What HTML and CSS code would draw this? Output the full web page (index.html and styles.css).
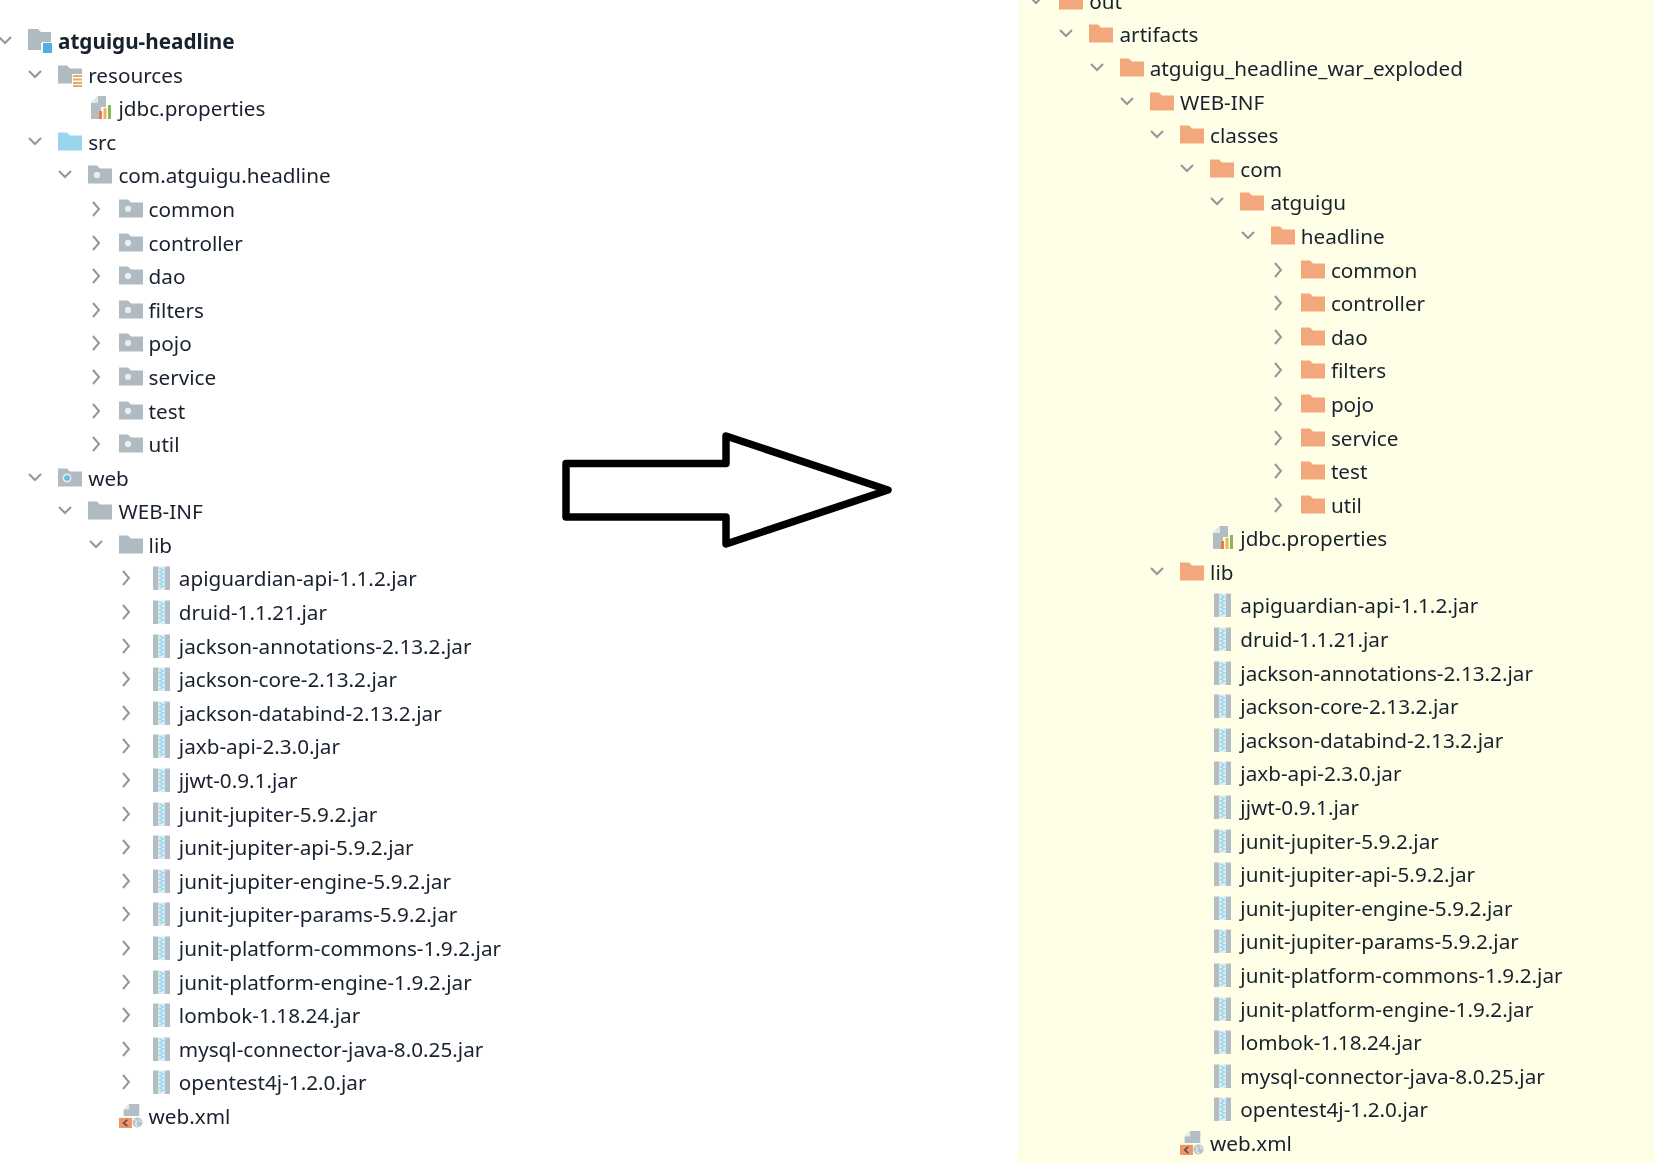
FILE: index.html
```html
<!DOCTYPE html>
<html lang="en">
<head>
<meta charset="utf-8">
<title>Project trees</title>
<link rel="stylesheet" href="styles.css">
</head>
<body>
<svg class="defs" width="0" height="0" aria-hidden="true">
  <defs>
    <symbol id="down" viewBox="0 0 14 24"><path d="M1 8l6 6 6-6" fill="none" stroke="#92979b" stroke-width="2"/></symbol>
    <symbol id="right" viewBox="0 0 14 24"><path d="M4 5l6 7-6 7" fill="none" stroke="#92979b" stroke-width="2"/></symbol>
    <symbol id="folder" viewBox="0 0 24 24"><path d="M0 2.500H9L12 5.500H24V20.500H0Z" fill="#b0bac1"/></symbol>
    <symbol id="root" viewBox="0 0 24 24"><path d="M-1 0H10L13 3H23V14H13V21H-1Z" fill="#b0bac1"/><rect x="14" y="13" width="11" height="11" fill="#fff"/><rect x="15" y="14" width="10" height="10" fill="#4fb2dd"/></symbol>
    <symbol id="res" viewBox="0 0 24 24"><path d="M0 2.500H9L12 5.500H24V20.500H0Z" fill="#b0bac1"/><rect x="14" y="11" width="11" height="13" fill="#fff"/><path d="M15 13h10M15 16.500h10M15 20h10M15 23h10" stroke="#e0ac66" stroke-width="1.800"/></symbol>
    <symbol id="src" viewBox="0 0 24 24"><path d="M0 2.500H9L12 5.500H24V20.500H0Z" fill="#9ad5ed"/></symbol>
    <symbol id="pkg" viewBox="0 0 24 24"><path d="M0 2.500H9L12 5.500H24V20.500H0Z" fill="#b0bac1"/><rect x="6" y="9" width="6" height="6" rx="2" fill="#e9edef"/></symbol>
    <symbol id="web" viewBox="0 0 24 24"><path d="M0 2.500H9L12 5.500H24V20.500H0Z" fill="#b0bac1"/><circle cx="9" cy="12" r="4.500" fill="#dfe8ec"/><circle cx="9" cy="12" r="2.800" fill="#5cbce4"/></symbol>
    <symbol id="out" viewBox="0 0 24 24"><path d="M0 2.500H9L12 5.500H24V20.500H0Z" fill="#f2a87c"/></symbol>
    <symbol id="jar" viewBox="0 0 24 24"><rect x="4" y="0.500" width="5.500" height="23.500" fill="#b3bdc4"/><rect x="15.500" y="0.500" width="5.500" height="23.500" fill="#b3bdc4"/><rect x="9.500" y="0.500" width="6" height="23.500" fill="#dceff6"/><path d="M10.500 2l4 2-4 2 4 2-4 2 4 2-4 2 4 2-4 2 4 2-4 2" fill="none" stroke="#8fd2ec" stroke-width="1.200"/></symbol>
    <symbol id="props" viewBox="0 0 24 24"><path d="M10 0H18V11H13V23H3V7Z" fill="#b3bdc4"/><path d="M3 7h7V0z" fill="#e4e8ea"/><rect x="11" y="15" width="3" height="8" fill="#ee7a3e"/><rect x="15.500" y="12" width="3" height="11" fill="#e9b85a"/><rect x="20" y="9" width="3" height="14" fill="#86b85c"/></symbol>
    <symbol id="xml" viewBox="0 0 26 26"><path d="M11 0H22V13H5V6Z" fill="#b3bdc4"/><path d="M5 6h6V0z" fill="#e8ebed"/><rect x="0" y="15" width="14" height="11" fill="#ee9468"/><path d="M9 17l-4 3.500 4 3.500" fill="none" stroke="#5a4a42" stroke-width="1.600"/><circle cx="20" cy="20" r="5.500" fill="#b9c3c9"/><path d="M17 17c3 1 2 3 1 4s2 3 3 3M22 16c-1 2 1 3 3 3" fill="none" stroke="#eef1f2" stroke-width="1.200"/></symbol>
  </defs>
</svg>
<main class="page">
  <section class="tree left">
    <div class="row"><svg class="chev"><use href="#down"/></svg><svg class="ico"><use href="#root"/></svg><span class="name strong">atguigu-headline</span></div>
    <div class="row d1"><svg class="chev"><use href="#down"/></svg><svg class="ico"><use href="#res"/></svg><span class="name">resources</span></div>
    <div class="row d2"><span class="chev"></span><svg class="ico"><use href="#props"/></svg><span class="name">jdbc.properties</span></div>
    <div class="row d1"><svg class="chev"><use href="#down"/></svg><svg class="ico"><use href="#src"/></svg><span class="name">src</span></div>
    <div class="row d2"><svg class="chev"><use href="#down"/></svg><svg class="ico"><use href="#pkg"/></svg><span class="name">com.atguigu.headline</span></div>
    <div class="row d3"><svg class="chev"><use href="#right"/></svg><svg class="ico"><use href="#pkg"/></svg><span class="name">common</span></div>
    <div class="row d3"><svg class="chev"><use href="#right"/></svg><svg class="ico"><use href="#pkg"/></svg><span class="name">controller</span></div>
    <div class="row d3"><svg class="chev"><use href="#right"/></svg><svg class="ico"><use href="#pkg"/></svg><span class="name">dao</span></div>
    <div class="row d3"><svg class="chev"><use href="#right"/></svg><svg class="ico"><use href="#pkg"/></svg><span class="name">filters</span></div>
    <div class="row d3"><svg class="chev"><use href="#right"/></svg><svg class="ico"><use href="#pkg"/></svg><span class="name">pojo</span></div>
    <div class="row d3"><svg class="chev"><use href="#right"/></svg><svg class="ico"><use href="#pkg"/></svg><span class="name">service</span></div>
    <div class="row d3"><svg class="chev"><use href="#right"/></svg><svg class="ico"><use href="#pkg"/></svg><span class="name">test</span></div>
    <div class="row d3"><svg class="chev"><use href="#right"/></svg><svg class="ico"><use href="#pkg"/></svg><span class="name">util</span></div>
    <div class="row d1"><svg class="chev"><use href="#down"/></svg><svg class="ico"><use href="#web"/></svg><span class="name">web</span></div>
    <div class="row d2"><svg class="chev"><use href="#down"/></svg><svg class="ico"><use href="#folder"/></svg><span class="name">WEB-INF</span></div>
    <div class="row d3"><svg class="chev"><use href="#down"/></svg><svg class="ico"><use href="#folder"/></svg><span class="name">lib</span></div>
    <div class="row d4"><svg class="chev"><use href="#right"/></svg><svg class="ico"><use href="#jar"/></svg><span class="name">apiguardian-api-1.1.2.jar</span></div>
    <div class="row d4"><svg class="chev"><use href="#right"/></svg><svg class="ico"><use href="#jar"/></svg><span class="name">druid-1.1.21.jar</span></div>
    <div class="row d4"><svg class="chev"><use href="#right"/></svg><svg class="ico"><use href="#jar"/></svg><span class="name">jackson-annotations-2.13.2.jar</span></div>
    <div class="row d4"><svg class="chev"><use href="#right"/></svg><svg class="ico"><use href="#jar"/></svg><span class="name">jackson-core-2.13.2.jar</span></div>
    <div class="row d4"><svg class="chev"><use href="#right"/></svg><svg class="ico"><use href="#jar"/></svg><span class="name">jackson-databind-2.13.2.jar</span></div>
    <div class="row d4"><svg class="chev"><use href="#right"/></svg><svg class="ico"><use href="#jar"/></svg><span class="name">jaxb-api-2.3.0.jar</span></div>
    <div class="row d4"><svg class="chev"><use href="#right"/></svg><svg class="ico"><use href="#jar"/></svg><span class="name">jjwt-0.9.1.jar</span></div>
    <div class="row d4"><svg class="chev"><use href="#right"/></svg><svg class="ico"><use href="#jar"/></svg><span class="name">junit-jupiter-5.9.2.jar</span></div>
    <div class="row d4"><svg class="chev"><use href="#right"/></svg><svg class="ico"><use href="#jar"/></svg><span class="name">junit-jupiter-api-5.9.2.jar</span></div>
    <div class="row d4"><svg class="chev"><use href="#right"/></svg><svg class="ico"><use href="#jar"/></svg><span class="name">junit-jupiter-engine-5.9.2.jar</span></div>
    <div class="row d4"><svg class="chev"><use href="#right"/></svg><svg class="ico"><use href="#jar"/></svg><span class="name">junit-jupiter-params-5.9.2.jar</span></div>
    <div class="row d4"><svg class="chev"><use href="#right"/></svg><svg class="ico"><use href="#jar"/></svg><span class="name">junit-platform-commons-1.9.2.jar</span></div>
    <div class="row d4"><svg class="chev"><use href="#right"/></svg><svg class="ico"><use href="#jar"/></svg><span class="name">junit-platform-engine-1.9.2.jar</span></div>
    <div class="row d4"><svg class="chev"><use href="#right"/></svg><svg class="ico"><use href="#jar"/></svg><span class="name">lombok-1.18.24.jar</span></div>
    <div class="row d4"><svg class="chev"><use href="#right"/></svg><svg class="ico"><use href="#jar"/></svg><span class="name">mysql-connector-java-8.0.25.jar</span></div>
    <div class="row d4"><svg class="chev"><use href="#right"/></svg><svg class="ico"><use href="#jar"/></svg><span class="name">opentest4j-1.2.0.jar</span></div>
    <div class="row d3"><span class="chev"></span><svg class="ico"><use href="#xml"/></svg><span class="name">web.xml</span></div>
  </section>
  <div class="arrow-slot">
    <svg class="arrow" viewBox="0 0 340 124" aria-hidden="true"><path d="M6 33.500H166V6L328 60 166 114V87H6Z" fill="#fff" stroke="#000" stroke-width="7.500" stroke-linejoin="round"/></svg>
  </div>
  <section class="panel">
    <div class="tree right">
      <div class="row"><svg class="chev"><use href="#down"/></svg><svg class="ico"><use href="#out"/></svg><span class="name">out</span></div>
      <div class="row d1"><svg class="chev"><use href="#down"/></svg><svg class="ico"><use href="#out"/></svg><span class="name">artifacts</span></div>
      <div class="row d2"><svg class="chev"><use href="#down"/></svg><svg class="ico"><use href="#out"/></svg><span class="name">atguigu_headline_war_exploded</span></div>
      <div class="row d3"><svg class="chev"><use href="#down"/></svg><svg class="ico"><use href="#out"/></svg><span class="name">WEB-INF</span></div>
      <div class="row d4"><svg class="chev"><use href="#down"/></svg><svg class="ico"><use href="#out"/></svg><span class="name">classes</span></div>
      <div class="row d5"><svg class="chev"><use href="#down"/></svg><svg class="ico"><use href="#out"/></svg><span class="name">com</span></div>
      <div class="row d6"><svg class="chev"><use href="#down"/></svg><svg class="ico"><use href="#out"/></svg><span class="name">atguigu</span></div>
      <div class="row d7"><svg class="chev"><use href="#down"/></svg><svg class="ico"><use href="#out"/></svg><span class="name">headline</span></div>
      <div class="row d8"><svg class="chev"><use href="#right"/></svg><svg class="ico"><use href="#out"/></svg><span class="name">common</span></div>
      <div class="row d8"><svg class="chev"><use href="#right"/></svg><svg class="ico"><use href="#out"/></svg><span class="name">controller</span></div>
      <div class="row d8"><svg class="chev"><use href="#right"/></svg><svg class="ico"><use href="#out"/></svg><span class="name">dao</span></div>
      <div class="row d8"><svg class="chev"><use href="#right"/></svg><svg class="ico"><use href="#out"/></svg><span class="name">filters</span></div>
      <div class="row d8"><svg class="chev"><use href="#right"/></svg><svg class="ico"><use href="#out"/></svg><span class="name">pojo</span></div>
      <div class="row d8"><svg class="chev"><use href="#right"/></svg><svg class="ico"><use href="#out"/></svg><span class="name">service</span></div>
      <div class="row d8"><svg class="chev"><use href="#right"/></svg><svg class="ico"><use href="#out"/></svg><span class="name">test</span></div>
      <div class="row d8"><svg class="chev"><use href="#right"/></svg><svg class="ico"><use href="#out"/></svg><span class="name">util</span></div>
      <div class="row d5"><span class="chev"></span><svg class="ico"><use href="#props"/></svg><span class="name">jdbc.properties</span></div>
      <div class="row d4"><svg class="chev"><use href="#down"/></svg><svg class="ico"><use href="#out"/></svg><span class="name">lib</span></div>
      <div class="row d5"><span class="chev"></span><svg class="ico"><use href="#jar"/></svg><span class="name">apiguardian-api-1.1.2.jar</span></div>
      <div class="row d5"><span class="chev"></span><svg class="ico"><use href="#jar"/></svg><span class="name">druid-1.1.21.jar</span></div>
      <div class="row d5"><span class="chev"></span><svg class="ico"><use href="#jar"/></svg><span class="name">jackson-annotations-2.13.2.jar</span></div>
      <div class="row d5"><span class="chev"></span><svg class="ico"><use href="#jar"/></svg><span class="name">jackson-core-2.13.2.jar</span></div>
      <div class="row d5"><span class="chev"></span><svg class="ico"><use href="#jar"/></svg><span class="name">jackson-databind-2.13.2.jar</span></div>
      <div class="row d5"><span class="chev"></span><svg class="ico"><use href="#jar"/></svg><span class="name">jaxb-api-2.3.0.jar</span></div>
      <div class="row d5"><span class="chev"></span><svg class="ico"><use href="#jar"/></svg><span class="name">jjwt-0.9.1.jar</span></div>
      <div class="row d5"><span class="chev"></span><svg class="ico"><use href="#jar"/></svg><span class="name">junit-jupiter-5.9.2.jar</span></div>
      <div class="row d5"><span class="chev"></span><svg class="ico"><use href="#jar"/></svg><span class="name">junit-jupiter-api-5.9.2.jar</span></div>
      <div class="row d5"><span class="chev"></span><svg class="ico"><use href="#jar"/></svg><span class="name">junit-jupiter-engine-5.9.2.jar</span></div>
      <div class="row d5"><span class="chev"></span><svg class="ico"><use href="#jar"/></svg><span class="name">junit-jupiter-params-5.9.2.jar</span></div>
      <div class="row d5"><span class="chev"></span><svg class="ico"><use href="#jar"/></svg><span class="name">junit-platform-commons-1.9.2.jar</span></div>
      <div class="row d5"><span class="chev"></span><svg class="ico"><use href="#jar"/></svg><span class="name">junit-platform-engine-1.9.2.jar</span></div>
      <div class="row d5"><span class="chev"></span><svg class="ico"><use href="#jar"/></svg><span class="name">lombok-1.18.24.jar</span></div>
      <div class="row d5"><span class="chev"></span><svg class="ico"><use href="#jar"/></svg><span class="name">mysql-connector-java-8.0.25.jar</span></div>
      <div class="row d5"><span class="chev"></span><svg class="ico"><use href="#jar"/></svg><span class="name">opentest4j-1.2.0.jar</span></div>
      <div class="row d4"><span class="chev"></span><svg class="ico"><use href="#xml"/></svg><span class="name">web.xml</span></div>
    </div>
  </section>
</main>
</body>
</html>
```
FILE: styles.css
```css
html, body {
  margin: 0;
  height: 100%;
  background: #fff;
  overflow: hidden;
}
.defs {
  display: block;
  height: 0;
}
.page {
  display: flex;
  height: 1164px;
  width: 1654px;
  overflow: hidden;
}
.tree {
  font-family: "Noto Sans", "Open Sans", sans-serif;
  font-size: 20.7px;
  color: #18212e;
  filter: blur(0.45px);
  flex: none;
}
.left {
  width: 560px;
  padding-top: 24.2px;
}
.right {
  margin-top: -16px;
  padding-left: 13.300px;
}
.row {
  display: flex;
  align-items: center;
  height: 33.6px;
  white-space: nowrap;
}
.d1 { padding-left: 30.2px; }
.d2 { padding-left: 60.4px; }
.d3 { padding-left: 90.6px; }
.d4 { padding-left: 120.8px; }
.d5 { padding-left: 151px; }
.d6 { padding-left: 181.2px; }
.d7 { padding-left: 211.4px; }
.d8 { padding-left: 241.6px; }
.chev {
  flex: none;
  width: 14px;
  height: 24px;
  margin-left: -2px;
  margin-right: 16px;
}
.ico {
  flex: none;
  width: 24px;
  height: 24px;
  margin-right: 6px;
  overflow: visible;
}
.strong {
  font-weight: 700;
}
.arrow-slot {
  flex: none;
  width: 458px;
  padding-top: 430px;
}
.arrow {
  display: block;
  width: 340px;
  height: 124px;
}
.panel {
  flex: 1;
  background: #ffffe8;
  overflow: hidden;
}
```
